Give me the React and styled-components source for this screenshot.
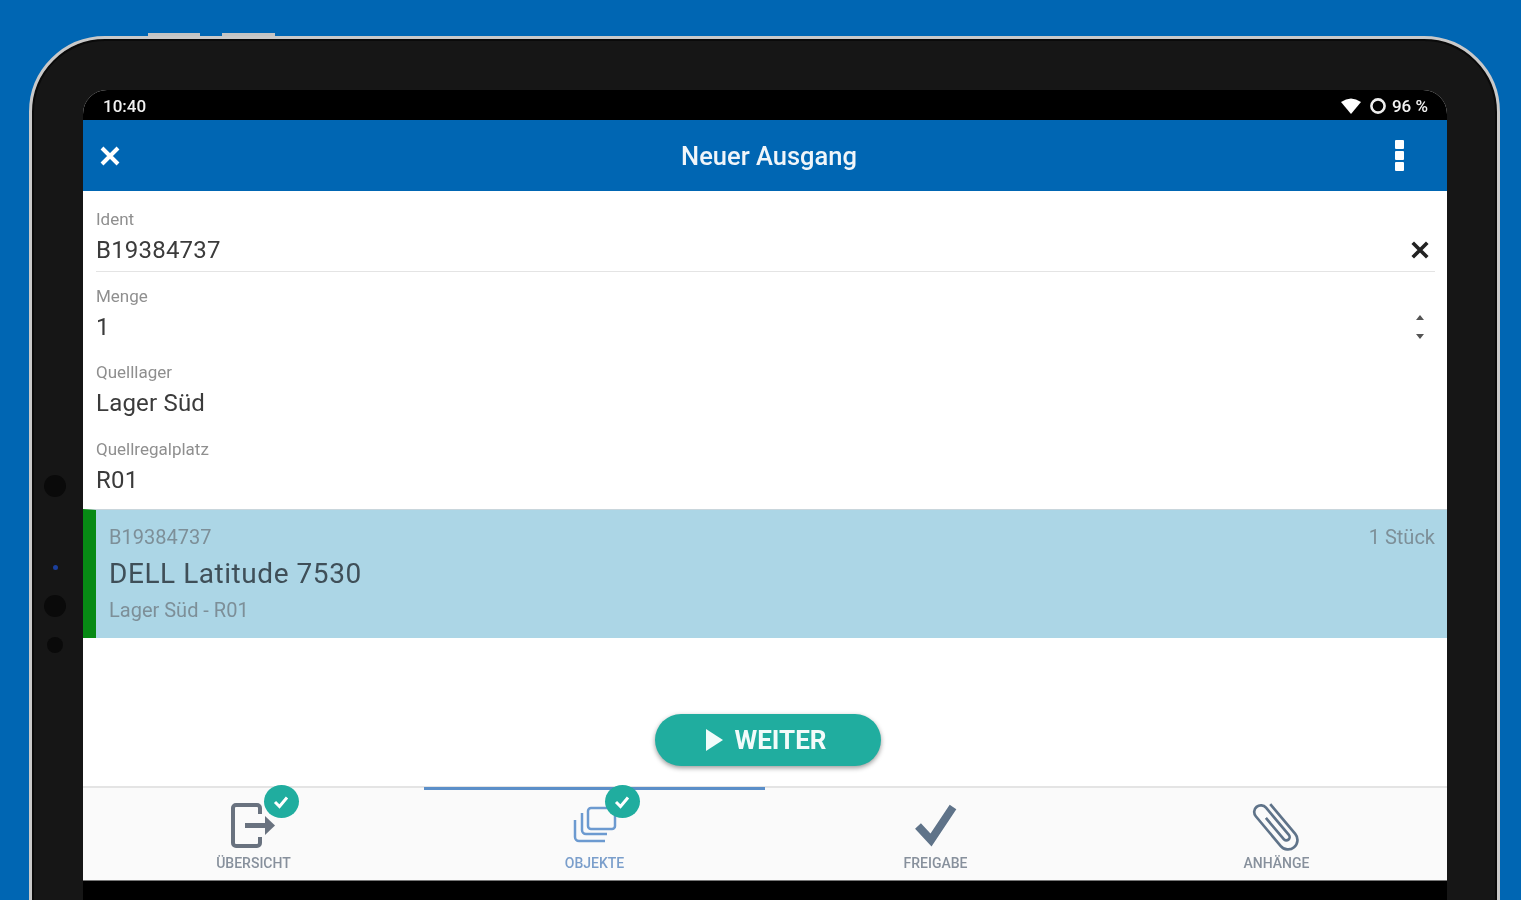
import React from 'react'
import styled, { createGlobalStyle } from 'styled-components'

const GlobalStyle = createGlobalStyle`
  html, body {
    margin: 0;
    padding: 0;
    height: 900px;
    overflow: hidden;
    background: #0066b3;
    font-family: Roboto, "Liberation Sans", sans-serif;
  }
`

const Page = styled.div`
  width: 1521px;
  height: 900px;
  overflow: hidden;
  padding: 36px 0 0 29px;
  box-sizing: border-box;
  background: #0066b3;
`

const Device = styled.div`
  position: relative;
  box-sizing: border-box;
  width: 1471px;
  height: 1000px;
  padding: 51px 50px 0 51px;
  background: #161616;
  border: 3px solid #c9c9c9;
  border-radius: 76px;
  box-shadow: inset 0 0 0 2px #0a0a0a;
  filter: blur(0.6px);
`

const HardwareButton = styled.span`
  position: absolute;
  top: -6px;
  left: ${({ $left }) => $left}px;
  width: ${({ $width }) => $width}px;
  height: 3px;
  background: #c4c4c4;
`

const CameraDot = styled.span`
  position: absolute;
  left: ${({ $left }) => $left}px;
  top: ${({ $top }) => $top}px;
  width: ${({ $size }) => $size}px;
  height: ${({ $size }) => $size}px;
  border-radius: 50%;
  background: ${({ $color }) => $color || '#0a0a0a'};
`

const Screen = styled.div`
  display: flex;
  flex-direction: column;
  height: 860px;
  border-radius: 24px 24px 0 0;
  overflow: hidden;
  background: #fff;
`

const StatusBar = styled.div`
  display: flex;
  flex: 0 0 30px;
  align-items: center;
  justify-content: space-between;
  padding: 2px 19px 0 20px;
  box-sizing: border-box;
  background: #000;
  color: #f2f2f2;
  font-size: 17px;
  font-weight: 500;
`

const StatusIcons = styled.div`
  display: flex;
  align-items: center;
  gap: 6px;
`

const WifiGlyph = styled.svg`
  margin-right: 3px;
`

const AppBar = styled.header`
  display: flex;
  flex: 0 0 71px;
  align-items: center;
  justify-content: space-between;
  padding: 0 42px 0 16px;
  box-sizing: border-box;
  background: #0066b3;
  color: #fff;
`

const AppTitle = styled.h1`
  margin: 0 0 0 22px;
  font-size: 25.5px;
  font-weight: 500;
  color: #f0f5f9;
`

const Fields = styled.div`
  display: flex;
  flex-direction: column;
  flex: 0 0 318px;
  box-sizing: border-box;
  padding-top: 4.5px;
`

const Field = styled.div`
  display: flex;
  flex: 0 0 76.5px;
  box-sizing: border-box;
  flex-direction: column;
  justify-content: flex-start;
  margin: 0 12px 0 13px;
  padding-top: 14.5px;
  position: relative;
  border-bottom: ${({ $underlined }) => ($underlined ? '1px solid #e4e4e4' : '0')};
`

const FieldLabel = styled.label`
  font-size: 17px;
  line-height: 18px;
  color: #8f8f8f;
`

const FieldValue = styled.div`
  margin-top: 8px;
  font-size: 24px;
  line-height: 28px;
  letter-spacing: 0.2px;
  color: #3b3b3b;
`

const FieldAction = styled.span`
  position: absolute;
  right: ${({ $right }) => $right}px;
  top: ${({ $top }) => $top}px;
  display: flex;
`

const SelectedRow = styled.div`
  display: grid;
  grid-template-columns: 1fr auto;
  align-content: start;
  flex: 0 0 129px;
  box-sizing: border-box;
  padding: 16px 12px 0 13px;
  background: #acd6e6;
  border-left: 13px solid #078a14;
  border-top: 1px solid #c9d6dc;
`

const RowMeta = styled.div`
  font-size: 20px;
  line-height: 22px;
  color: #7d8f98;
`

const RowTitle = styled.div`
  grid-column: 1 / -1;
  margin-top: 9px;
  font-size: 28px;
  line-height: 34px;
  letter-spacing: 0.55px;
  color: #3f4f58;
`

const RowSub = styled(RowMeta)`
  grid-column: 1 / -1;
  margin-top: 8px;
`

const ActionArea = styled.div`
  display: flex;
  flex: 0 0 148px;
  box-sizing: border-box;
  align-items: flex-start;
  justify-content: center;
  padding-top: 76px;
`

const ContinueButton = styled.button`
  display: flex;
  align-items: center;
  justify-content: center;
  gap: 11px;
  width: 226px;
  height: 52px;
  margin-left: 6px;
  padding: 0 4px 0 0;
  border: 0;
  border-radius: 26px;
  background: #20ad9f;
  box-shadow: 0 2px 5px rgba(0, 0, 0, 0.4);
  color: #f2fbfa;
  font-family: inherit;
  font-size: 26px;
  font-weight: 700;
`

const TabBar = styled.nav`
  display: grid;
  grid-template-columns: repeat(4, 1fr);
  flex: 0 0 95px;
  box-sizing: border-box;
  background: #fafafa;
  border-top: 2px solid #e4e4e4;
  border-bottom: 1px solid #777;
`

const Tab = styled.div`
  position: relative;
  display: flex;
  flex-direction: column;
  align-items: center;
  color: ${({ $active }) => ($active ? '#7a9ecb' : '#87909c')};

  &::before {
    content: '';
    display: ${({ $active }) => ($active ? 'block' : 'none')};
    position: absolute;
    top: -1px;
    left: 0;
    right: 0;
    height: 3px;
    background: #5b8fc9;
  }
`

const TabIcon = styled.span`
  position: relative;
  display: flex;
  box-sizing: border-box;
  align-items: center;
  justify-content: center;
  width: 60px;
  height: 67px;
  padding-top: 8px;
`

const TabLabel = styled.span`
  font-size: 14px;
  line-height: 16px;
  font-weight: 500;
  text-transform: uppercase;
`

const DoneBadge = styled.span`
  position: absolute;
  top: -3px;
  right: -15px;
  display: flex;
  align-items: center;
  justify-content: center;
  width: 35px;
  height: 33px;
  border-radius: 50%;
  background: #20ad9f;
`

const BottomBlack = styled.div`
  flex: 1;
  background: #000;
`

const CloseIcon = ({ size = 22, color = '#fff', width = 4 }) => (
  <svg width={size} height={size} viewBox="0 0 22 22">
    <path d="M3 3 L19 19 M19 3 L3 19" stroke={color} strokeWidth={width} fill="none" />
  </svg>
)

const BadgeCheck = () => (
  <svg width="18" height="16" viewBox="0 0 18 16">
    <path d="M3 8 L7.5 12.5 L15 3.5" stroke="#fff" strokeWidth="3" fill="none" />
  </svg>
)

const ExitIcon = () => (
  <svg width="50" height="48" viewBox="0 0 50 48">
    <path d="M31 12 V6 a3 3 0 0 0 -3 -3 H7 a3 3 0 0 0 -3 3 V41 a3 3 0 0 0 3 3 H28 a3 3 0 0 0 3 -3 V35" stroke="#69727f" strokeWidth="4" fill="none" />
    <path d="M16 23.5 H37" stroke="#69727f" strokeWidth="5" fill="none" />
    <path d="M36 14 L46 23.5 L36 33 Z" fill="#69727f" />
  </svg>
)

const LayersIcon = () => (
  <svg width="46" height="40" viewBox="0 0 46 40">
    <g stroke="#6c9ad0" strokeWidth="2.5" fill="none">
      <rect x="16" y="2" width="27" height="21" rx="3" />
      <path d="M10 7 V24 a4 4 0 0 0 4 4 H35" />
      <path d="M3 14 V31 a4 4 0 0 0 4 4 H33" />
    </g>
  </svg>
)

const CheckIcon = () => (
  <svg width="44" height="44" viewBox="0 0 44 44">
    <path d="M4 22 L17 36 L39 3" stroke="#5f7389" strokeWidth="8" fill="none" />
  </svg>
)

const ClipIcon = () => (
  <svg width="56" height="60" viewBox="-25 -27 50 54">
    <g transform="rotate(-40)">
      <path
        d="M8 -19 V16 a8.5 8.5 0 0 1 -17 0 V-19 a6 6 0 0 1 12 0 V13 a3 3 0 0 1 -6 0 V-12"
        stroke="#5f7389"
        strokeWidth="2.4"
        fill="none"
      />
    </g>
  </svg>
)

const tabs = [
  { label: 'Übersicht', icon: <ExitIcon />, done: true },
  { label: 'Objekte', icon: <LayersIcon />, done: true, active: true },
  { label: 'Freigabe', icon: <CheckIcon /> },
  { label: 'Anhänge', icon: <ClipIcon /> },
]

export default function App() {
  return (
    <Page>
      <GlobalStyle />
      <Device>
        <HardwareButton $left={116} $width={52} />
        <HardwareButton $left={190} $width={53} />
        <CameraDot $left={12} $top={436} $size={22} />
        <CameraDot $left={12} $top={556} $size={22} />
        <CameraDot $left={15} $top={598} $size={16} />
        <CameraDot $left={21} $top={526} $size={5} $color="#1b3f9c" />
        <Screen>
          <StatusBar>
            <span>10:40</span>
            <StatusIcons>
              <WifiGlyph width="20" height="16" viewBox="0 0 20 16">
                <path d="M0 4 Q10 -3 20 4 L10 16 Z" fill="#fff" />
              </WifiGlyph>
              <svg width="16" height="16" viewBox="0 0 16 16">
                <circle cx="8" cy="8" r="6.6" stroke="#eee" strokeWidth="2.6" fill="none" />
              </svg>
              <span>96 %</span>
            </StatusIcons>
          </StatusBar>
          <AppBar>
            <CloseIcon />
            <AppTitle>Neuer Ausgang</AppTitle>
            <svg width="10" height="32" viewBox="0 0 10 32">
              <rect x="0" y="0" width="9" height="9" rx="1" fill="#fff" />
              <rect x="0" y="11" width="9" height="9" rx="1" fill="#fff" />
              <rect x="0" y="22" width="9" height="9" rx="1" fill="#fff" />
            </svg>
          </AppBar>
          <Fields>
            <Field $underlined>
              <FieldLabel>Ident</FieldLabel>
              <FieldValue>B19384737</FieldValue>
              <FieldAction $top={44} $right={5}>
                <CloseIcon size={20} color="#222" />
              </FieldAction>
            </Field>
            <Field>
              <FieldLabel>Menge</FieldLabel>
              <FieldValue>1</FieldValue>
              <FieldAction $top={39} $right={8}>
                <svg width="14" height="32" viewBox="0 0 14 32">
                  <path d="M7 4 L11 9 H3 Z M3 23 H11 L7 28 Z" fill="#555" />
                </svg>
              </FieldAction>
            </Field>
            <Field>
              <FieldLabel>Quelllager</FieldLabel>
              <FieldValue>Lager Süd</FieldValue>
            </Field>
            <Field>
              <FieldLabel>Quellregalplatz</FieldLabel>
              <FieldValue>R01</FieldValue>
            </Field>
          </Fields>
          <SelectedRow>
            <RowMeta>B19384737</RowMeta>
            <RowMeta>1 Stück</RowMeta>
            <RowTitle>DELL Latitude 7530</RowTitle>
            <RowSub>Lager Süd - R01</RowSub>
          </SelectedRow>
          <ActionArea>
            <ContinueButton>
              <svg width="18" height="22" viewBox="0 0 18 22">
                <path d="M1 0 L18 11 L1 22 Z" fill="#f2fbfa" />
              </svg>
              WEITER
            </ContinueButton>
          </ActionArea>
          <TabBar>
            {tabs.map(tab => (
              <Tab key={tab.label} $active={tab.active}>
                <TabIcon>
                  {tab.icon}
                  {tab.done && (
                    <DoneBadge>
                      <BadgeCheck />
                    </DoneBadge>
                  )}
                </TabIcon>
                <TabLabel>{tab.label}</TabLabel>
              </Tab>
            ))}
          </TabBar>
          <BottomBlack />
        </Screen>
      </Device>
    </Page>
  )
}
